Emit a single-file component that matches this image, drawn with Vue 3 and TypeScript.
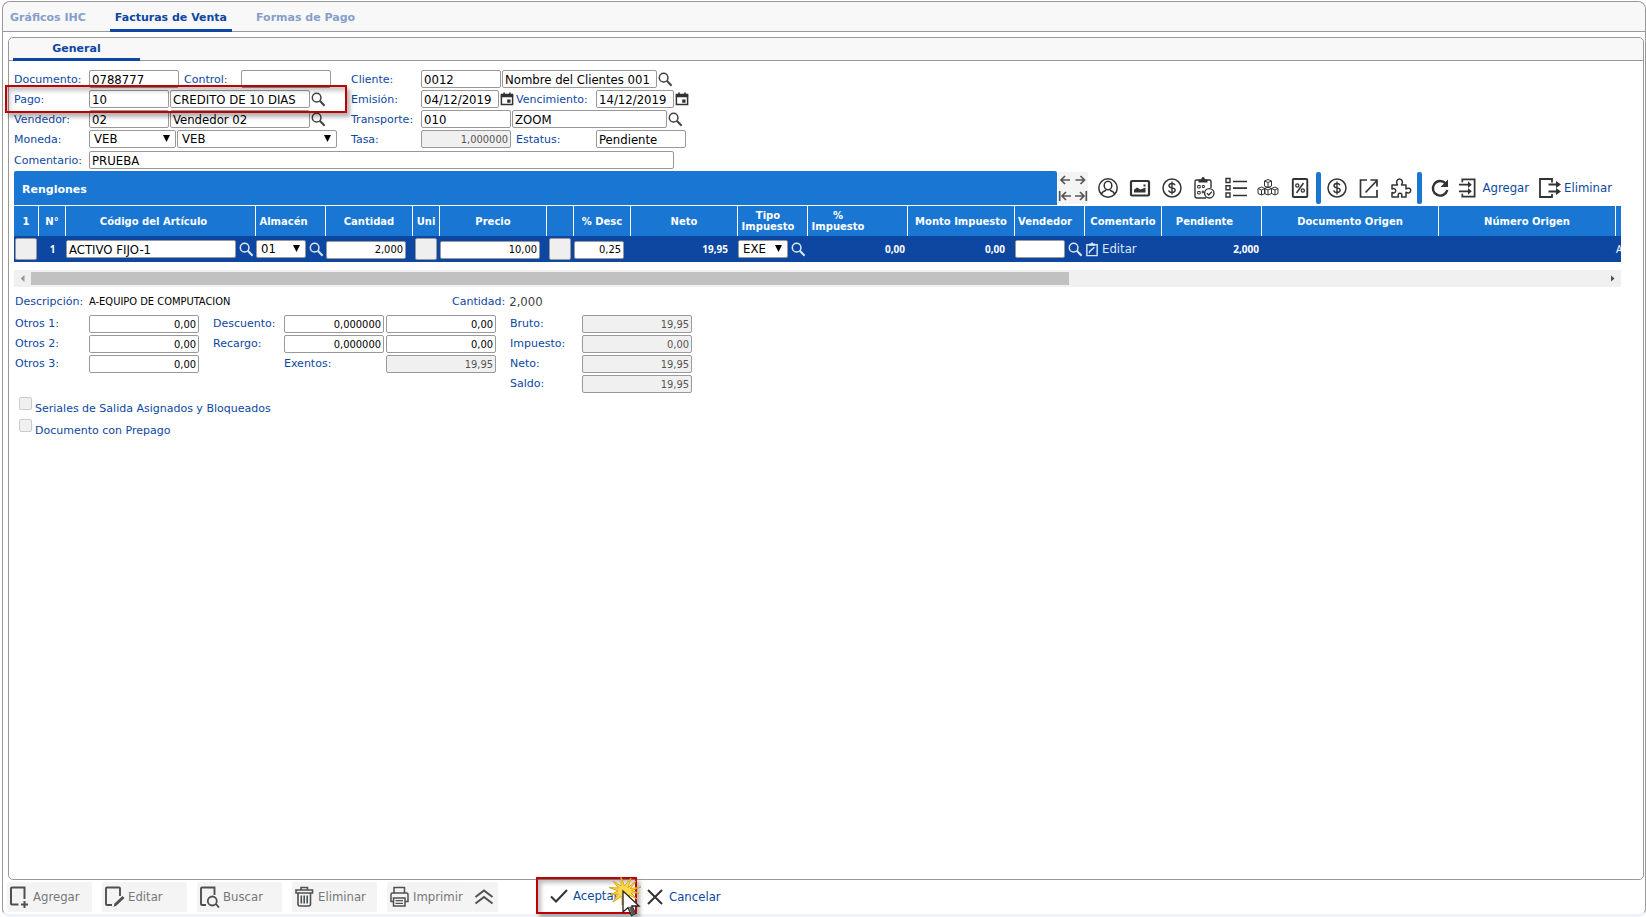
<script setup lang="ts">
import { ref } from 'vue'

interface Column {
  key: string
  label: string
  width: number
  align?: string
}

const columns: Column[] = [
  { key: 'sel', label: '1', width: 25 },
  { key: 'num', label: 'N°', width: 27 },
  { key: 'codigo', label: 'Código del Artículo', width: 190, align: 'shift' },
  { key: 'almacen', label: 'Almacén', width: 70, align: 'shift' },
  { key: 'cantidad', label: 'Cantidad', width: 87 },
  { key: 'uni', label: 'Uni', width: 27 },
  { key: 'precio', label: 'Precio', width: 107 },
  { key: 'extra', label: '', width: 27 },
  { key: 'desc', label: '% Desc', width: 57 },
  { key: 'neto', label: 'Neto', width: 107 },
  { key: 'tipo', label: 'Tipo Impuesto', width: 70, align: 'narrow' },
  { key: 'porc', label: '% Impuesto', width: 100, align: 'narrow' },
  { key: 'monto', label: 'Monto Impuesto', width: 107 },
  { key: 'vendedor', label: 'Vendedor', width: 70, align: 'narrow' },
  { key: 'comentario', label: 'Comentario', width: 77 },
  { key: 'pendiente', label: 'Pendiente', width: 100, align: 'shift' },
  { key: 'docOrigen', label: 'Documento Origen', width: 177 },
  { key: 'numOrigen', label: 'Número Origen', width: 177 },
  { key: 'articulo', label: '', width: 240 },
]

const tools = ['user', 'image', 'dollar', 'clip', 'list', 'cubes', 'percent']
const tools2 = ['dollar', 'external', 'puzzle']

const footerActions = [
  { icon: 'add', label: 'Agregar' },
  { icon: 'edit', label: 'Editar' },
  { icon: 'find', label: 'Buscar' },
  { icon: 'trash', label: 'Eliminar' },
]

const doc = ref({
  documento: '0788777',
  control: '',
  pago: '10',
  pagoNombre: 'CREDITO DE 10 DIAS',
  vendedor: '02',
  vendedorNombre: 'Vendedor 02',
  comentario: 'PRUEBA',
  cliente: '0012',
  clienteNombre: 'Nombre del Clientes 001',
  emision: '04/12/2019',
  vencimiento: '14/12/2019',
  transporte: '010',
  transporteNombre: 'ZOOM',
  tasa: '1,000000',
  estatus: 'Pendiente',
})

const totals = [
  { id: 'bruto', label: 'Bruto:', value: '19,95' },
  { id: 'impuesto', label: 'Impuesto:', value: '0,00' },
  { id: 'neto', label: 'Neto:', value: '19,95' },
  { id: 'saldo', label: 'Saldo:', value: '19,95' },
]
</script>

<template>
  <svg class="defs" aria-hidden="true">
    <symbol id="g-search" viewBox="0 0 16 16"><circle cx="6" cy="6" r="4.6" fill="none" stroke="currentColor" stroke-width="1.6" /><path d="M9.400 9.400 14.500 14.700" stroke="currentColor" stroke-width="2.200" /></symbol>
    <symbol id="g-cal" viewBox="0 0 14 15"><path d="M1 3.2h12v10.3H1z" fill="none" stroke="currentColor" stroke-width="1.6" /><path d="M.4 2h13.2v3.500H.4zM3 .6h1.7V3H3zM9.3.6H11V3H9.3zM7.2 8h3.6v3.6H7.2z" fill="currentColor" /></symbol>
    <symbol id="g-left" viewBox="0 0 15 14"><path d="M12 7H3M7 3 3 7l4 4" fill="none" stroke="currentColor" stroke-width="1.7" /></symbol>
    <symbol id="g-right" viewBox="0 0 15 14"><path d="M2.500 7h9M7.500 3l4 4-4 4" fill="none" stroke="currentColor" stroke-width="1.7" /></symbol>
    <symbol id="g-first" viewBox="0 0 15 14"><path d="M13 7H4M8 3 4 7l4 4M1.700 2v10" fill="none" stroke="currentColor" stroke-width="1.7" /></symbol>
    <symbol id="g-last" viewBox="0 0 15 14"><path d="M2 7h9M7 3l4 4-4 4M13.300 2v10" fill="none" stroke="currentColor" stroke-width="1.7" /></symbol>
    <symbol id="g-user" viewBox="0 0 22 22"><g fill="none" stroke="currentColor" stroke-width="1.500"><circle cx="11" cy="11" r="9.200" /><ellipse cx="11" cy="8.500" rx="3.800" ry="4.300" /><path d="M4.300 17.200c.6-2.500 2.500-3.200 4.700-4M17.700 17.200c-.6-2.500-2.500-3.200-4.700-4" /></g></symbol>
    <symbol id="g-image" viewBox="0 0 22 22"><rect x="2" y="4" width="18" height="14.500" rx="1" fill="none" stroke="currentColor" stroke-width="2.200" /><path d="M5 15.500v-2.700l3-2.300 3.500 2 5-2v5zM14.500 7.500h2v2h-2z" fill="currentColor" /></symbol>
    <symbol id="g-dollar" viewBox="0 0 22 22"><g fill="none" stroke="currentColor"><circle cx="11" cy="11" r="9" stroke-width="1.500" /><path d="M14 8.300C13.500 6.900 12.300 6.500 11 6.500c-1.700 0-3 .8-3 2.200 0 3.100 6.200 1.300 6.200 4.400 0 1.500-1.400 2.400-3.200 2.400-1.600 0-2.900-.7-3.200-2.200M11 4.500v13" stroke-width="1.400" /></g></symbol>
    <symbol id="g-clip" viewBox="0 0 22 22"><g fill="none" stroke="currentColor" stroke-width="1.400"><path d="M13 21H4a2 2 0 0 1-2-2V4.500A1.500 1.500 0 0 1 3.500 3h13A1.500 1.500 0 0 1 18 4.500V11" /><circle cx="16.300" cy="16.300" r="4.700" /><path d="m14 16.300 1.800 1.800 3-3.300" /><path d="M4.700 8.500h2.500v2.500H4.700zM4.700 14.500h2.500V17H4.700zM9.300 8.500h2v2h-2zM9.300 14h1v2h-1z" stroke-width="1" /></g><path d="M5.500 2.500h2.700C8.500.8 9 0 10 0s1.700.8 2 2.500h2.500v3h-9z" fill="currentColor" /></symbol>
    <symbol id="g-list" viewBox="0 0 22 22"><g fill="none" stroke="currentColor"><path d="M1 1.500h4v4H1zM1 8.800h4v4H1zM1 16h4v4H1z" stroke-width="1.400" /><path d="M8 4.500h14M8 11.200h14M8 18.500h14" stroke-width="1.700" /></g></symbol>
    <symbol id="g-cubes" viewBox="0 0 22 22"><g fill="none" stroke="currentColor" stroke-width="1"><path d="M7.500 4 11 2.500 14.500 4v5L11 10.500 7.500 9zM7.500 4 11 5.500 14.500 4M11 5.500v5M1 11.500 4.500 10l3.500 1.500v5L4.500 18 1 16.500zM1 11.500 4.500 13 8 11.500M4.500 13v5M7.500 11.500 11 10l3.500 1.500v5L11 18l-3.500-1.500zM7.500 11.500 11 13l3.500-1.500M11 13v5M14.500 11.500 18 10l3 1.500v5L18 18l-3.500-1.500zM14.500 11.500 18 13l3-1.500M18 13v5" /></g></symbol>
    <symbol id="g-percent" viewBox="0 0 22 22"><g fill="none" stroke="currentColor"><rect x="3.800" y="2" width="14.500" height="18" rx="1" stroke-width="1.900" /><path d="M14.500 6 7.500 16" stroke-width="1.500" /><circle cx="8.300" cy="8.500" r="1.600" stroke-width="1.300" /><circle cx="13.800" cy="13.500" r="1.600" stroke-width="1.300" /></g></symbol>
    <symbol id="g-external" viewBox="0 0 22 22"><path d="M9 3H2.500v17H19v-7M7.500 15.500 19 3.500M12.500 3H19v6.500" fill="none" stroke="currentColor" stroke-width="1.700" /></symbol>
    <symbol id="g-puzzle" viewBox="0 0 22 22"><path d="M2 8h5.500c-1.800-2.600-.8-6 2-6s3.800 3.400 2 6H16v4c2-1.500 4.700-.8 4.700 1.600s-2.700 3.200-4.700 1.600V20h-4.500c1-2.500 0-3.700-1.500-3.700S7.500 17.500 8.500 20H2v-4.500c2.200 1 3.700 0 3.700-1.800S4.200 11 2 12z" fill="none" stroke="currentColor" stroke-width="1.500" stroke-linejoin="round" /></symbol>
    <symbol id="g-refresh" viewBox="0 0 20 20"><path d="M15.500 5.300A7.300 7.300 0 1 0 17.300 12" fill="none" stroke="currentColor" stroke-width="2.400" /><path d="M18 1.500V9h-7.500z" fill="currentColor" /></symbol>
    <symbol id="g-rowin" viewBox="0 0 20 20"><g fill="none" stroke="currentColor" stroke-width="1.800"><path d="M4.500 4V1h13v18h-13v-3M1 6.500h11M1 13.500h11" /></g><path d="m10.500 3 4 3.500-4 3.500zM10.500 10l4 3.500-4 3.500z" fill="currentColor" /></symbol>
    <symbol id="g-rowout" viewBox="0 0 24 20"><g fill="none" stroke="currentColor" stroke-width="1.800"><path d="M14 4.500V1H2v18h12v-3M10.500 6.500h9M10.500 13.500h9" /></g><path d="m18 3 5 3.500-5 3.500zM18 10l5 3.500-5 3.500z" fill="currentColor" /></symbol>
    <symbol id="g-note" viewBox="0 0 14 16"><g fill="none" stroke="currentColor" stroke-width="1.500"><path d="M1.500 3h11v11.500h-11z" /><path d="m4 12 .5-2L9.500 5.500" /></g><path d="M4 1.500h1.800L7 0l1.200 1.500H10V4H4z" fill="currentColor" /></symbol>
    <symbol id="g-add" viewBox="0 0 22 22"><path d="M9.500 18.500H3a1 1 0 0 1-1-1V2.500a1 1 0 0 1 1-1h12.500V13M15.500 15v7M12 18.500h7" fill="none" stroke="currentColor" stroke-width="2" /></symbol>
    <symbol id="g-edit" viewBox="0 0 22 22"><path d="M8 19H3a1 1 0 0 1-1-1V2.500a1 1 0 0 1 1-1h12a1 1 0 0 1 1 1V10" fill="none" stroke="currentColor" stroke-width="1.900" /><path d="m10.500 17.500 8-7.500 2 2-8 7.500-3 1.500z" fill="currentColor" /></symbol>
    <symbol id="g-find" viewBox="0 0 22 22"><path d="M7 19H3a1 1 0 0 1-1-1V2.500a1 1 0 0 1 1-1h12.500V9M17 18l3 3.500" fill="none" stroke="currentColor" stroke-width="1.900" /><circle cx="13.300" cy="15" r="4.500" fill="none" stroke="currentColor" stroke-width="1.800" /></symbol>
    <symbol id="g-trash" viewBox="0 0 22 22"><g fill="none" stroke="currentColor" stroke-width="1.600"><path d="M7 3.500V1.500h6.500v2M2 7V4h16.500v3zM4 7v11a2 2 0 0 0 2 2h8.500a2 2 0 0 0 2-2V7M7.300 9.500v8M10.200 9.500v8M13.200 9.500v8" /></g></symbol>
    <symbol id="g-print" viewBox="0 0 22 22"><g fill="none" stroke="currentColor" stroke-width="1.500"><path d="M5 7V1.500h10.500V7M4.500 15.500H2V8.500A1.500 1.500 0 0 1 3.500 7h14A1.500 1.500 0 0 1 19 8.500v7h-3M4.500 12h11.500v8H4.500z" /><path d="M6.500 14.700h7.500M6.500 17.300h7.500" stroke-width="1.200" /></g></symbol>
    <symbol id="g-up" viewBox="0 0 20 16"><path d="M1.500 8 10 1.500 18.500 8M1.500 14.500 10 8l8.500 6.500" fill="none" stroke="currentColor" stroke-width="2" /></symbol>
    <symbol id="g-check" viewBox="0 0 18 14"><path d="M1 7.500 6 12.500 17 1" fill="none" stroke="currentColor" stroke-width="2" /></symbol>
    <symbol id="g-x" viewBox="0 0 16 16"><path d="M1 1 15 15M15 1 1 15" fill="none" stroke="currentColor" stroke-width="2" /></symbol>
  </svg>

  <main class="frame">
    <nav class="tabs">
      <a href="#graficos" class="tab">Gráficos IHC</a>
      <a href="#facturas" class="tab active">Facturas de Venta</a>
      <a href="#formas" class="tab">Formas de Pago</a>
    </nav>

    <section class="panel">
      <nav class="subtabs"><a href="#general" class="subtab">General</a></nav>

      <form class="content" @submit.prevent>
        <div class="form">
          <div class="block">
            <div class="line">
              <label class="l75" for="documento">Documento:</label>
              <input id="documento" v-model="doc.documento" class="w90">
              <label class="control" for="control">Control:</label>
              <input id="control" v-model="doc.control" class="w90">
            </div>
            <div class="line marked">
              <label class="l75" for="pago">Pago:</label>
              <input id="pago" v-model="doc.pago" class="w80">
              <input v-model="doc.pagoNombre" class="w140" aria-label="Nombre del pago">
              <button type="button" class="ib" aria-label="Buscar pago"><svg><use href="#g-search" /></svg></button>
            </div>
            <div class="line">
              <label class="l75" for="vendedor">Vendedor:</label>
              <input id="vendedor" v-model="doc.vendedor" class="w80">
              <input v-model="doc.vendedorNombre" class="w140" aria-label="Nombre del vendedor">
              <button type="button" class="ib" aria-label="Buscar vendedor"><svg><use href="#g-search" /></svg></button>
            </div>
            <div class="line">
              <label class="l75" for="moneda">Moneda:</label>
              <span class="pick w87"><select id="moneda"><option>VEB</option></select></span>
              <span class="pick w160"><select aria-label="Nombre de la moneda"><option>VEB</option></select></span>
            </div>
          </div>

          <div class="block">
            <div class="line">
              <label class="l70" for="cliente">Cliente:</label>
              <input id="cliente" v-model="doc.cliente" class="w80">
              <input v-model="doc.clienteNombre" class="w154" aria-label="Nombre del cliente">
              <button type="button" class="ib" aria-label="Buscar cliente"><svg><use href="#g-search" /></svg></button>
            </div>
            <div class="line">
              <label class="l70" for="emision">Emisión:</label>
              <input id="emision" v-model="doc.emision" class="w78">
              <button type="button" class="ib cal" aria-label="Fecha de emisión"><svg><use href="#g-cal" /></svg></button>
              <label class="l80" for="vencimiento">Vencimiento:</label>
              <input id="vencimiento" v-model="doc.vencimiento" class="w78">
              <button type="button" class="ib cal" aria-label="Fecha de vencimiento"><svg><use href="#g-cal" /></svg></button>
            </div>
            <div class="line">
              <label class="l70" for="transporte">Transporte:</label>
              <input id="transporte" v-model="doc.transporte" class="w90">
              <input v-model="doc.transporteNombre" class="w154" aria-label="Nombre del transporte">
              <button type="button" class="ib" aria-label="Buscar transporte"><svg><use href="#g-search" /></svg></button>
            </div>
            <div class="line">
              <label class="l70" for="tasa">Tasa:</label>
              <input id="tasa" v-model="doc.tasa" class="w90 num ro" readonly>
              <label class="l84" for="estatus">Estatus:</label>
              <input id="estatus" v-model="doc.estatus" class="w90">
            </div>
          </div>
        </div>
        <div class="line comment">
          <label class="l75" for="comentario">Comentario:</label>
          <input id="comentario" v-model="doc.comentario" class="wide">
        </div>

        <div class="gridbar">
          <h2>Renglones</h2>
          <div class="arrows">
            <button v-for="a in ['left', 'right', 'first', 'last']" :key="a" type="button" :aria-label="a"><svg><use :href="'#g-' + a" /></svg></button>
          </div>
          <div class="tools">
            <button v-for="t in tools" :key="t" type="button" class="tool" :aria-label="t"><svg><use :href="'#g-' + t" /></svg></button>
          </div>
          <span class="bar"></span>
          <div class="tools">
            <button v-for="t in tools2" :key="t" type="button" class="tool" :aria-label="t"><svg><use :href="'#g-' + t" /></svg></button>
          </div>
          <span class="bar"></span>
          <button type="button" class="rowact refresh" aria-label="Refrescar"><svg><use href="#g-refresh" /></svg></button>
          <button type="button" class="rowact add"><svg><use href="#g-rowin" /></svg>Agregar</button>
          <button type="button" class="rowact del"><svg><use href="#g-rowout" /></svg>Eliminar</button>
        </div>

        <div class="gridwrap">
          <table>
            <colgroup><col v-for="c in columns" :key="c.key" :style="{ width: c.width + 'px' }"></colgroup>
            <thead>
              <tr><th v-for="c in columns" :key="c.key" :class="c.align"><span>{{ c.label }}</span></th></tr>
            </thead>
            <tbody>
              <tr>
                <td><button type="button" class="sq" aria-label="Seleccionar"></button></td>
                <td class="mid">1</td>
                <td><div class="cell"><input value="ACTIVO FIJO-1" class="w170" aria-label="Código"><button type="button" class="ib" aria-label="Buscar artículo"><svg><use href="#g-search" /></svg></button></div></td>
                <td><div class="cell"><span class="pick w50"><select aria-label="Almacén"><option>01</option></select></span><button type="button" class="ib" aria-label="Buscar almacén"><svg><use href="#g-search" /></svg></button></div></td>
                <td><input value="2,000" class="w80 num" aria-label="Cantidad"></td>
                <td class="sqc"><button type="button" class="sq" aria-label="Unidad"></button></td>
                <td><input value="10,00" class="w100 num" aria-label="Precio"></td>
                <td class="sqc"><button type="button" class="sq" aria-label="Descuentos"></button></td>
                <td><input value="0,25" class="w50 num" aria-label="% Desc"></td>
                <td class="rt in">19,95</td>
                <td><div class="cell"><span class="pick w50"><select aria-label="Tipo de impuesto"><option>EXE</option></select></span><button type="button" class="ib" aria-label="Buscar impuesto"><svg><use href="#g-search" /></svg></button></div></td>
                <td class="rt">0,00</td>
                <td class="rt in">0,00</td>
                <td><div class="cell"><input class="w50" aria-label="Vendedor del renglón"><button type="button" class="ib" aria-label="Buscar vendedor"><svg><use href="#g-search" /></svg></button></div></td>
                <td><button type="button" class="note"><svg><use href="#g-note" /></svg>Editar</button></td>
                <td class="rt">2,000</td>
                <td></td>
                <td></td>
                <td class="art">A-EQUIPO DE COMPUTACION</td>
              </tr>
            </tbody>
          </table>
        </div>
        <div class="scroll">
          <button type="button" class="sa prev" aria-label="Desplazar a la izquierda"></button>
          <div class="track"><div class="thumb"></div></div>
          <button type="button" class="sa next" aria-label="Desplazar a la derecha"></button>
        </div>

        <div class="line descr">
          <span class="lbl l74">Descripción:</span><span class="dval">A-EQUIPO DE COMPUTACION</span>
          <span class="lbl">Cantidad:</span><span class="qval">2,000</span>
        </div>

        <div class="sums">
          <div class="block">
            <div v-for="n in 3" :key="n" class="line">
              <label class="l74" :for="'otros' + n">Otros {{ n }}:</label>
              <input :id="'otros' + n" value="0,00" class="w110 num">
            </div>
          </div>
          <div class="block">
            <div v-for="f in ['Descuento', 'Recargo']" :key="f" class="line">
              <label class="l71" :for="f">{{ f }}:</label>
              <input :id="f" value="0,000000" class="w100 num">
              <input value="0,00" class="w110 num second" :aria-label="'Monto ' + f">
            </div>
            <div class="line ex">
              <label for="exentos">Exentos:</label>
              <input id="exentos" value="19,95" class="w110 num ro" readonly>
            </div>
          </div>
          <div class="block">
            <div v-for="t in totals" :key="t.id" class="line">
              <label class="l72" :for="t.id">{{ t.label }}</label>
              <input :id="t.id" :value="t.value" class="w110 num ro" readonly>
            </div>
          </div>
        </div>

        <div class="checks">
          <label><input type="checkbox" disabled>Seriales de Salida Asignados y Bloqueados</label>
          <label><input type="checkbox" disabled>Documento con Prepago</label>
        </div>
      </form>
    </section>

    <footer>
      <button v-for="a in footerActions" :key="a.label" type="button" class="fb off" disabled><svg><use :href="'#g-' + a.icon" /></svg>{{ a.label }}</button>
      <div class="printgroup">
        <button type="button" class="fb off" disabled><svg><use href="#g-print" /></svg>Imprimir</button>
        <button type="button" class="fb off up" disabled aria-label="Más opciones"><svg><use href="#g-up" /></svg></button>
      </div>
      <div class="accept">
        <button type="button" class="fb ok"><svg><use href="#g-check" /></svg>Aceptar</button>
        <svg class="pointer" viewBox="0 0 32 42" aria-hidden="true">
          <path d="m12 0 3.500 9L22 1l-3 9.500L27 4l-5.500 7.500L32 10l-9.500 3.500L30 16l-8 0 6 6-8-4 2 8-5-7-4 9 0-9-9 6 5-8-8 1 8-4-9-3.500 9.500.5L4 4l8 5z" fill="#fbd850" stroke="#dca514" stroke-width="1" />
          <path d="M14 14v21l5-4.500 3.500 8 4-2-3.500-7.500h7z" fill="#fff" stroke="#222" stroke-width="1.300" />
          <path d="m20 30 3 8.500 3.500-2-3.500-7.500z" fill="#555" />
        </svg>
      </div>
      <button type="button" class="fb cancel"><svg><use href="#g-x" /></svg>Cancelar</button>
    </footer>
  </main>
</template>

<style>
body { background: #fff; }
</style>

<style scoped>
*, *::before, *::after { box-sizing: border-box; }
.defs { position: absolute; width: 0; height: 0; }
.frame {
  display: flex; flex-direction: column; min-height: calc(100vh - 1px); margin: 1px 0 0 2px;
  border: 1px solid #999; border-bottom: 3px solid #eff3f8; border-radius: 8px;
  font: 11px/18px "DejaVu Sans", Verdana, sans-serif; color: #0d47a1;
}
.tabs { display: flex; align-items: flex-start; height: 30px; padding-left: 2px; background: #f8f8f8; border-bottom: 1px solid #999; border-radius: 8px 8px 0 0; }
.tab { height: 30px; padding: 0 5px; margin-right: 19px; line-height: 32px; font-weight: 700; color: #869fca; text-decoration: none; }
.active { color: #0d47a1; border-bottom: 3px solid #0d47a1; }
.panel { flex: 1; margin: 5px 1px 0 5px; border: 1px solid #999; border-radius: 5px; }
.subtabs { height: 23px; padding-left: 4px; background: #f8f8f8; border-bottom: 1px solid #999; border-radius: 5px 5px 0 0; }
.subtab { display: block; width: 127px; height: 23px; line-height: 22px; text-align: center; font-weight: 700; color: #0d47a1; text-decoration: none; border-bottom: 3px solid #0d47a1; }
.content { padding: 8px 22px 0 5px; }
.form { display: flex; gap: 14px; }
.block { display: flex; flex-direction: column; }
.form .block:first-child { width: 323px; }
.line { display: flex; align-items: center; height: 20px; gap: 1px; }
.form label, .comment label { padding-top: 2px; }
.comment { height: 21px; padding-top: 1px; }
label, .lbl { flex: none; white-space: nowrap; }
.l75 { width: 74px; }
.l74 { width: 73px; }
.l71 { width: 70px; }
.l72 { width: 71px; }
.l70 { width: 69px; }
.l80 { width: 79px; }
.l84 { width: 83px; padding-left: 4px; }
.control { width: 60px; padding-left: 4px; }
input, select {
  height: 18px; margin: 0; padding: 0 2px; border: 1px solid #999; border-radius: 2px; background: #fff; color: #000;
  font: 13px/16px "DejaVu Sans Condensed", Tahoma, sans-serif;
}
.num { font: 11px/16px "DejaVu Sans Condensed", Tahoma, sans-serif; text-align: right; }
.ro { background: #f0f0f0; color: #555; }
.w50 { width: 50px; }
.w78 { width: 78px; }
.w80 { width: 80px; }
.w87 { width: 87px; }
.w90 { width: 90px; }
.w100 { width: 100px; }
.w110 { width: 110px; }
.w140 { width: 140px; }
.w154 { width: 155px; }
.w160 { width: 160px; }
.w170 { width: 170px; }
.wide { width: 585px; }
.pick { position: relative; display: inline-block; height: 18px; }
.pick select { display: block; width: 100%; padding-left: 4px; appearance: none; }
.pick::after { content: ""; position: absolute; right: 6px; top: 5px; width: 7px; height: 7px; background: #000; clip-path: polygon(0 0, 100% 0, 50% 100%); pointer-events: none; }
button { padding: 0; margin: 0; border: 0; background: none; font: 13px/18px "DejaVu Sans Condensed", Tahoma, sans-serif; color: #0d47a1; }
button svg { display: block; flex: none; }
.ib { color: #444; }
.ib svg { width: 15px; height: 15px; }
.cal { color: #333; }
.cal svg { width: 14px; height: 14px; margin-right: 1px; }
.marked { position: relative; }
.marked::before { content: ""; position: absolute; left: -9px; top: -4px; width: 342px; height: 28px; border: 2px solid #c00000; box-shadow: 3px 4px 4px rgba(0, 0, 0, .3), inset 3px 4px 4px rgba(0, 0, 0, .22); pointer-events: none; z-index: 2; }

.gridbar { display: flex; align-items: center; height: 34px; margin-top: 1px; }
.gridbar h2 { flex: 1; height: 34px; margin: 0; padding-left: 8px; background: #1976d2; border-radius: 2px 2px 0 0; font-size: 11px; line-height: 37px; color: #fff; }
.arrows { display: grid; grid-template-columns: 15px 15px; margin: 0 4px 0 1px; background: #f4f4f4; }
.arrows button { color: #555; }
.arrows svg { width: 15px; height: 16px; }
.tools { display: flex; gap: 10px; padding: 0 5px; }
.tool { color: #333; }
.tool svg { width: 22px; height: 22px; }
.bar { width: 5px; height: 32px; background: #1976d2; border-radius: 2px; }
.rowact { display: flex; align-items: center; }
.rowact svg { color: #333; }
.refresh svg { width: 20px; height: 20px; margin: 0 8px 0 8px; }
.add svg { width: 19px; height: 20px; margin-right: 6px; }
.del svg { width: 24px; height: 20px; margin: 0 2px 0 9px; }
.del { padding-right: 9px; }

.gridwrap { overflow: hidden; margin-top: 1px; }
table { width: 1842px; table-layout: fixed; border-collapse: separate; border-spacing: 0; }
th { height: 30px; padding: 0; background: #1976d2; border-right: 1px solid #fff; color: #fff; font: 700 10px/11px "DejaVu Sans", Verdana, sans-serif; }
th.shift { padding-right: 14px; }
th.narrow span { display: block; width: 60px; }
td { height: 26px; padding: 0; background: #0d47a1; color: #fff; font: 700 10px/18px "Noto Sans", Tahoma, sans-serif; white-space: nowrap; vertical-align: middle; }
td > input { display: block; margin-top: 1px; }
.cell { display: flex; align-items: center; }
.cell .ib { padding-left: 3px; color: #dbe6f5; }
.mid { text-align: center; }
.sq { display: block; width: 22px; height: 22px; margin-left: 1px; background: #efefef; border: 1px solid #999; border-radius: 2px; }
.sqc .sq { margin-left: 2px; }
.rt { text-align: right; padding-right: 3px; }
.in { padding-right: 10px; }
.art { font-weight: 400; }
.note { display: flex; align-items: center; color: #dbe6f5; }
.note svg { width: 14px; height: 15px; margin-right: 3px; }

.scroll { display: flex; height: 17px; margin-top: 8px; background: #f0f0f0; }
.sa { width: 17px; }
.sa::before { content: ""; display: block; width: 4px; height: 7px; margin: 0 auto; background: #505050; clip-path: polygon(0 0, 100% 50%, 0 100%); }
.prev::before { background: #999; clip-path: polygon(100% 0, 100% 100%, 0 50%); }
.track { flex: 1; padding: 2px 0; }
.thumb { width: 66%; height: 13px; background: #c1c1c1; }

.descr { height: 26px; margin-top: 1px; padding: 1px 0 0 1px; }
.dval { width: 362px; font: 11px/18px "DejaVu Sans Condensed", Tahoma, sans-serif; color: #000; }
.qval { margin-left: 3px; font: 13px/18px "DejaVu Sans Condensed", Tahoma, sans-serif; color: #444; }
.sums { display: flex; gap: 14px; padding-left: 1px; }
.second { margin-left: 1px; }
.ex { justify-content: flex-end; }
.ex label { width: 101px; }
.checks { display: flex; flex-direction: column; margin-top: 3px; }
.checks label { display: flex; align-items: flex-start; height: 22px; line-height: 24px; }
.checks input { appearance: none; width: 13px; height: 13px; margin: 0 3px 0 5px; background: #f0f0f0; border: 1px solid #ccc; }

footer { display: flex; align-items: center; height: 34px; padding-left: 4px; gap: 10px; }
.fb { display: flex; align-items: center; height: 30px; font-size: 13px; }
.fb svg { width: 22px; height: 22px; }
.off { width: 85px; padding-left: 2px; background: #f4f4f4; border-radius: 2px; color: #777; }
.off svg { color: #505050; margin-right: 2px; }
.printgroup { display: flex; }
.up { width: 26px; }
.up svg { width: 20px; height: 16px; }
.accept { position: relative; display: flex; align-items: center; width: 101px; height: 37px; margin: -4px 0 0 28px; padding-top: 2px; border: 2px solid #c00000; box-shadow: 3px 4px 4px rgba(0, 0, 0, .3), inset 3px 4px 4px rgba(0, 0, 0, .25); }
.ok { padding-left: 12px; }
.ok svg { width: 18px; height: 14px; margin-right: 5px; color: #333; }
.accept .pointer { position: absolute; left: 71px; top: -2px; width: 32px; height: 42px; }
.cancel svg { width: 16px; height: 16px; margin-right: 6px; color: #333; }
</style>
